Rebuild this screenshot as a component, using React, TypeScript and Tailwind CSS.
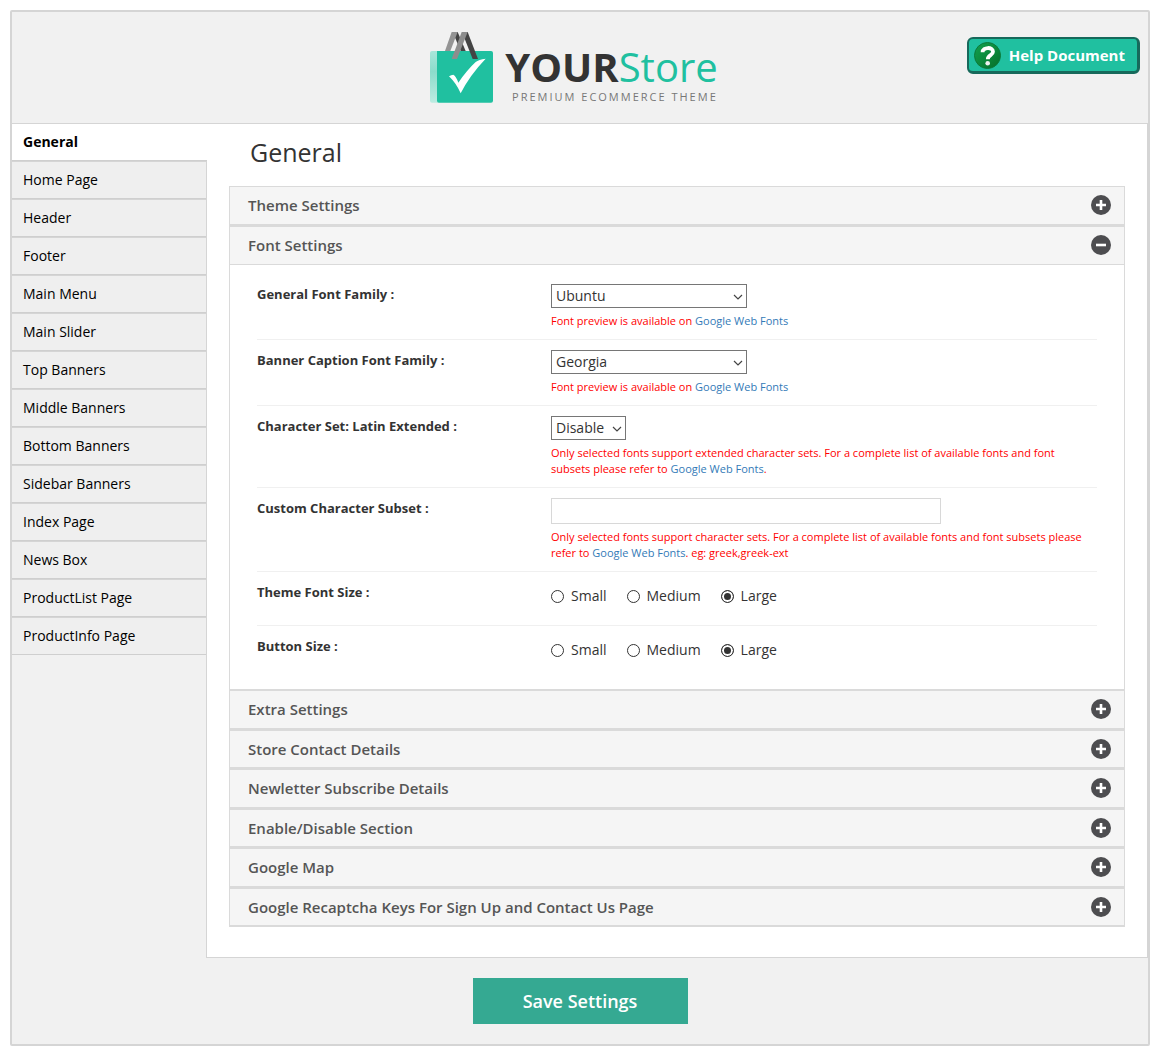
import React, { useState } from "react";

const pages = [
  "General",
  "Home Page",
  "Header",
  "Footer",
  "Main Menu",
  "Main Slider",
  "Top Banners",
  "Middle Banners",
  "Bottom Banners",
  "Sidebar Banners",
  "Index Page",
  "News Box",
  "ProductList Page",
  "ProductInfo Page",
];

const sections = [
  "Theme Settings",
  "Font Settings",
  "Extra Settings",
  "Store Contact Details",
  "Newletter Subscribe Details",
  "Enable/Disable Section",
  "Google Map",
  "Google Recaptcha Keys For Sign Up and Contact Us Page",
];

function BagMark() {
  return (
    <svg viewBox="60 36 189 213" className="h-[71px] w-[63px] shrink-0" aria-hidden="true">
      <defs>
        <linearGradient id="bagSide" x1="0" y1="0" x2="0" y2="1">
          <stop offset="0" stopColor="#a9e6da" />
          <stop offset="0.4" stopColor="#8cdccb" />
          <stop offset="1" stopColor="#bdece2" />
        </linearGradient>
      </defs>
      <path d="M66 93h20v155H66a6 6 0 0 1-6-6V99a6 6 0 0 1 6-6z" fill="url(#bagSide)" />
      <path d="M81 93h162a6 6 0 0 1 6 6v143a6 6 0 0 1-6 6H87a6 6 0 0 1-6-6z" fill="#20c0a0" />
      <path d="M128 36h15l24 57h-15z" fill="#444" />
      <path d="M125 36h18l-22 57h-16z" fill="#949494" />
      <path d="M158 36h15l31 81h-16l-27-68z" fill="#444" />
      <path d="M155 36h18l-32 81h-16z" fill="#8d8d8d" />
      <path d="M117 169q7-5 13-5q8 4 15 24q26-38 52-62q9-8 30-10q-48 50-75 104q-13-30-35-51z" fill="#fff" />
    </svg>
  );
}

function Logo() {
  return (
    <div className="mr-3 flex items-end gap-3">
      <BagMark />
      <div className="flex flex-col items-end">
        <div className="text-[40px] leading-10 text-[#20c0a0]">
          <span className="font-bold text-[#333]">YOUR</span>Store
        </div>
        <div className="mt-1 text-[11px] leading-3 tracking-[2px] text-[#777]">PREMIUM ECOMMERCE THEME</div>
      </div>
    </div>
  );
}

function HelpIcon() {
  return (
    <svg viewBox="0 0 27 27" className="size-[27px]" aria-hidden="true">
      <defs>
        <linearGradient id="helpFill" x1="0" y1="0" x2="1" y2="1">
          <stop offset="0" stopColor="#12a050" />
          <stop offset="0.5" stopColor="#0c8a3c" />
          <stop offset="1" stopColor="#066b28" />
        </linearGradient>
      </defs>
      <circle cx="13.5" cy="13.5" r="13" fill="url(#helpFill)" stroke="#0b7a3b" />
      <path d="M8.6 10.2C8.6 4.900 19 4.500 19 9.800C19 13.300 13.800 13 13.800 17.200" fill="none" stroke="#fff" strokeWidth="3.800" />
      <circle cx="13.700" cy="21.300" r="2.300" fill="#eef0ee" />
    </svg>
  );
}

function Toggle({ open }: { open: boolean }) {
  return (
    <svg viewBox="0 0 20 20" className="size-5 shrink-0" aria-hidden="true">
      <circle cx="10" cy="10" r="10" fill="#4d4d50" />
      <path d={open ? "M5 10h10" : "M5 10h10M10 5v10"} stroke="#fff" strokeWidth="2.600" />
    </svg>
  );
}

function Row({ label, htmlFor, last, children }: { label: string; htmlFor?: string; last?: boolean; children: React.ReactNode }) {
  const style = "w-[294px] shrink-0 text-[13px] leading-5 font-bold";
  return (
    <div className={last ? "flex py-2.5" : "flex border-b border-[#f0f0f0] py-2.5"}>
      {htmlFor ? (
        <label htmlFor={htmlFor} className={style}>{label}</label>
      ) : (
        <div className={style}>{label}</div>
      )}
      <div className="min-w-0 flex-1">{children}</div>
    </div>
  );
}

function Hint({ children }: { children: React.ReactNode }) {
  return <p className="mt-[5px] pr-3 text-[11px] leading-4 text-[#f00]">{children}</p>;
}

function FontsLink() {
  return <a href="#fonts" className="text-[#337ab7]">Google Web Fonts</a>;
}

function Select({ id, options, wide }: { id: string; options: string[]; wide?: boolean }) {
  return (
    <div className={wide ? "relative h-6 w-[196px]" : "relative h-6 w-[75px]"}>
      <select id={id} className="block h-full w-full appearance-none border border-[#767676] bg-white pl-1 text-sm leading-5">
        {options.map((o) => (
          <option key={o}>{o}</option>
        ))}
      </select>
      <svg viewBox="0 0 10 6" className="pointer-events-none absolute top-[10px] right-1 h-1.5 w-2.5" aria-hidden="true">
        <path d="M1 1l4 4l4-4" fill="none" stroke="#444" strokeWidth="1.200" />
      </svg>
    </div>
  );
}

function SizeRadios({ name }: { name: string }) {
  return (
    <div role="radiogroup" aria-label={name} className="flex h-[33px] items-start gap-5 pt-1 text-sm leading-5">
      {["Small", "Medium", "Large"].map((s) => (
        <label key={s} className="flex items-center gap-[7px]">
          <input
            type="radio"
            name={name}
            defaultChecked={s === "Large"}
            className="size-[13px] appearance-none rounded-full border border-[#333] bg-white checked:bg-[#333] checked:shadow-[inset_0_0_0_2px_#fff]"
          />
          {s}
        </label>
      ))}
    </div>
  );
}

function FontSettings() {
  return (
    <div className="bg-white px-[27px] pt-[9px] pb-[10px]">
      <Row label="General Font Family :" htmlFor="general-font">
        <Select id="general-font" wide options={["Ubuntu", "Georgia", "Arial"]} />
        <Hint>Font preview is available on <FontsLink /></Hint>
      </Row>
      <Row label="Banner Caption Font Family :" htmlFor="banner-font">
        <Select id="banner-font" wide options={["Georgia", "Ubuntu", "Arial"]} />
        <Hint>Font preview is available on <FontsLink /></Hint>
      </Row>
      <Row label="Character Set: Latin Extended :" htmlFor="latin">
        <Select id="latin" options={["Disable", "Enable"]} />
        <Hint>
          Only selected fonts support extended character sets. For a complete list of available fonts and font subsets
          please refer to <FontsLink />.
        </Hint>
      </Row>
      <Row label="Custom Character Subset :" htmlFor="subset">
        <input id="subset" type="text" className="block h-[26px] w-[390px] border border-[#d8d8d8] bg-white px-2 text-sm" />
        <Hint>
          Only selected fonts support character sets. For a complete list of available fonts and font subsets please
          refer to <FontsLink />. eg: greek,greek-ext
        </Hint>
      </Row>
      <Row label="Theme Font Size :">
        <SizeRadios name="Theme Font Size" />
      </Row>
      <Row label="Button Size :" last>
        <SizeRadios name="Button Size" />
      </Row>
    </div>
  );
}

export default function App() {
  const [open, setOpen] = useState("Font Settings");
  return (
    <div className="bg-white p-2.5 pb-2 font-['Open_Sans',sans-serif] text-[#333]">
      <div className="rounded-xs border-2 border-[#d5d5d5] bg-[#f1f1f1]">
        <header className="grid grid-cols-[1fr_auto_1fr] items-start border-b border-[#d5d5d5] py-5">
          <div />
          <Logo />
          <a
            href="#help"
            className="mt-[5px] mr-2 flex h-[37px] items-center gap-2 justify-self-end rounded-md border-2 border-r-[3px] border-b-[3px] border-[#17695b] bg-[#20c0a0] pr-3 pl-[5px] text-[15px] leading-5 font-bold text-white"
          >
            <HelpIcon />
            Help Document
          </a>
        </header>

        <div className="flex">
          <nav className="w-[194px] shrink-0">
            {pages.map((p, i) => (
              <a
                key={p}
                href="#page"
                aria-current={i === 0 ? "page" : undefined}
                className={
                  i === 0
                    ? "relative -mr-px flex h-[37px] items-center border-b border-[#cfcfcf] bg-white px-[11px] text-sm font-bold text-black"
                    : "flex h-[38px] items-center border-y border-t-[#d5d5d5] border-b-[#cfcfcf] bg-[#efefef] px-[11px] text-sm text-black"
                }
              >
                {p}
              </a>
            ))}
          </nav>
          <main className="min-w-0 flex-1 border-r border-b border-l border-[#d5d5d5] bg-white px-[22px] pb-[30px]">
            <h1 className="mt-[11px] mb-[17px] pl-[21px] text-[25px] leading-[34px]">General</h1>
            {sections.map((s) => (
              <section key={s} className="group">
                <h2>
                  <button
                    type="button"
                    aria-expanded={open === s}
                    onClick={() => setOpen(open === s ? "" : s)}
                    className="flex h-10 w-full items-center justify-between border border-b-2 border-[#dadada] bg-[#f5f5f5] pr-[13px] pb-px pl-[18px] text-left text-[15px] leading-5 font-semibold text-[#555] group-odd:h-[39px] aria-expanded:border-b"
                  >
                    {s}
                    <Toggle open={open === s} />
                  </button>
                </h2>
                {open === s && (
                  <div className="border border-t-0 border-[#dadada]">
                    <FontSettings />
                  </div>
                )}
              </section>
            ))}
          </main>
        </div>

        <footer className="flex justify-center py-5">
          <button type="button" className="h-[46px] w-[215px] bg-[#35a992] text-lg font-semibold text-white">
            Save Settings
          </button>
        </footer>
      </div>
    </div>
  );
}
